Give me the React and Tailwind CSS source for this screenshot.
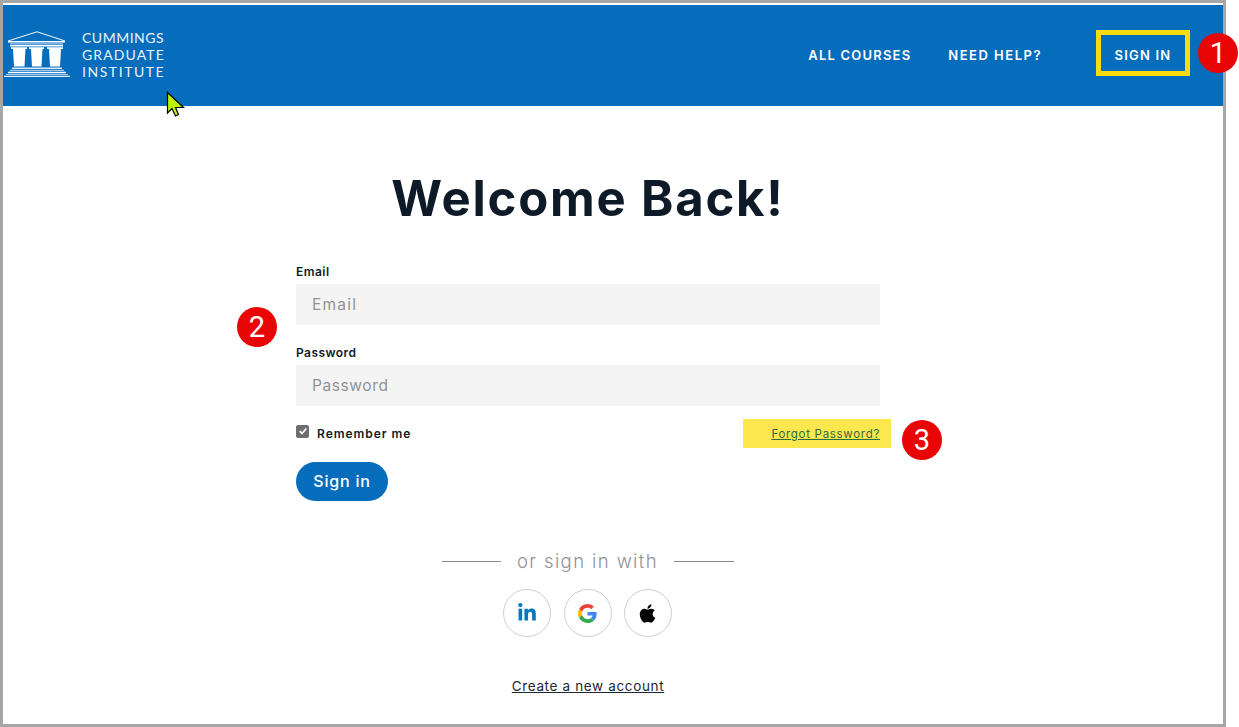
import React from 'react';
import { FaLinkedinIn, FaApple } from 'react-icons/fa';

function Logo() {
    return (
        <svg width="66" height="46" viewBox="0 0 66 46" className="block">
            <path d="M4 10 L33 .8 L61 10" fill="none" stroke="#e6f0fa" strokeWidth="1.200" />
            <path d="M4 10 H61 V11.500 H4 Z" fill="#ffffff" />
            <path d="M6 12.200 H59 V13.400 H6 Z" fill="#a9cbea" />
            <path d="M6 14 H59 V15.400 H6 Z" fill="#ffffff" />
            <path d="M7 16.200 H23 V18 H7 Z M25 16.200 H40 V18 H25 Z M43 16.200 H59 V18 H43 Z" fill="#ffffff" />
            <path d="M9 18 H21.500 L20.500 35.500 H10 Z M27 18 H38.500 L37.500 35.500 H28 Z M45 18 H57 L56 35.500 H46 Z" fill="#ffffff" />
            <path d="M8 36.500 H58 V38 H8 Z" fill="#dbe9f6" />
            <path d="M6 38.800 H60 V40 H6 Z" fill="#a9cbea" />
            <path d="M4 40.800 H62 V42.200 H4 Z" fill="#ffffff" />
            <path d="M2 43 H64 V44 H2 Z" fill="#a9cbea" />
            <path d="M0 44.800 H66 V46 H0 Z" fill="#e6f0fa" />
        </svg>
    );
}

function GoogleIcon() {
    return (
        <svg width="19" height="19" viewBox="0 0 48 48">
            <path fill="#EA4335" d="M24 9.500c3.500 0 6.700 1.200 9.200 3.600l6.900-6.900C35.900 2.400 30.500 0 24 0 14.600 0 6.500 5.400 2.600 13.200l8 6.200C12.500 13.700 17.800 9.500 24 9.500z" />
            <path fill="#4285F4" d="M47 24.500c0-1.600-.1-3.100-.4-4.500H24v9h12.900c-.6 3-2.200 5.500-4.700 7.200l7.700 6C44.400 38.500 47 32 47 24.500z" />
            <path fill="#FBBC05" d="M10.600 28.600c-.5-1.400-.8-3-.8-4.600s.3-3.200.8-4.600l-8-6.200C.9 16.500 0 20.100 0 24s.9 7.500 2.600 10.800l8-6.200z" />
            <path fill="#34A853" d="M24 48c6.500 0 11.900-2.100 15.900-5.800l-7.700-6c-2.200 1.400-4.900 2.300-8.200 2.300-6.200 0-11.500-4.200-13.400-9.900l-8 6.200C6.500 42.600 14.600 48 24 48z" />
        </svg>
    );
}

function Badge({ n, className }) {
    return (
        <div className={`absolute w-10 h-10 rounded-full bg-[#e90505] text-white flex items-center justify-center text-[29px] leading-none font-['Roboto',sans-serif] ${className}`}>
            {n}
        </div>
    );
}

function Field({ label, marginTop, tracking }) {
    return (
        <div className={marginTop}>
            <label className="block text-[12px] leading-[14px] font-semibold tracking-[0.45px] text-[#0f1a26] mb-[5px]">{label}</label>
            <div className={`h-[41px] bg-[#f4f4f4] pl-4 flex items-center text-[15.500px] text-[#8f9397] ${tracking}`}>{label}</div>
        </div>
    );
}

function Social({ children, className }) {
    return (
        <div className={`w-12 h-12 rounded-full border border-[#cfcfcf] flex items-center justify-center ${className || ''}`}>
            {children}
        </div>
    );
}

export default function App() {
    return (
        <div className="relative w-[1239px] h-[727px] bg-white overflow-hidden font-['Inter',sans-serif]">
            <div className="w-[1226px] h-[727px] border-[3px] border-[#a6a6a6] bg-white pt-[2px]">
                <header className="h-[101px] bg-[#066dbc] flex items-center text-white">
                    <div className="flex items-center ml-px mt-[-3px]">
                        <Logo />
                        <div className="ml-[12px] text-[14px] leading-[17px] font-['Lato',sans-serif] text-[#e9f2fa]">
                            <div className="tracking-[0.5px]">CUMMINGS</div>
                            <div className="tracking-[1.100px]">GRADUATE</div>
                            <div className="tracking-[1.550px]">INSTITUTE</div>
                        </div>
                    </div>
                    <nav className="ml-auto flex items-center text-[13px] font-semibold tracking-[1.200px] mr-[33px]">
                        <span>ALL COURSES</span>
                        <span className="ml-[37px] tracking-[1.500px]">NEED HELP?</span>
                        <span className="ml-[54px] mt-[-6px] pt-[6px] w-[94px] h-[46px] border-[5px] border-[#fcdc0c] flex items-center justify-center">SIGN IN</span>
                    </nav>
                </header>

                <main className="flex flex-col items-center pr-[50px]">
                    <h1 className="mt-[64px] text-[49px] leading-[58px] font-bold text-[#0e1a27] tracking-[1.800px]">Welcome Back!</h1>

                    <form className="w-[584px] mt-[37px]">
                        <Field label="Email" tracking="tracking-[1.200px]" />
                        <Field label="Password" marginTop="mt-[21px]" tracking="tracking-[0.6px]" />
                        <div className="flex items-center justify-between mt-[13px] h-[29px]">
                            <div className="flex items-center">
                                <span className="w-[13px] h-[13px] rounded-[2px] bg-[#6e6e6e] flex items-center justify-center mt-[-5px]">
                                    <svg width="10" height="10" viewBox="0 0 10 10"><path d="M1.800 5.200 L4 7.500 L8.300 2.500" fill="none" stroke="#fff" strokeWidth="1.700" /></svg>
                                </span>
                                <span className="ml-2 text-[12px] font-semibold tracking-[0.95px] text-[#0f1a26]">Remember me</span>
                            </div>
                            <div className="w-[148px] h-[29px] mr-[-11px] bg-[#fde74f] flex items-center justify-end pr-[11px]">
                                <a className="mt-[2px] text-[11.500px] tracking-[0.7px] text-[#2f6b3f] underline">Forgot Password?</a>
                            </div>
                        </div>
                        <button type="button" className="block mt-[14px] pb-[2px] w-[92px] h-[39px] rounded-full bg-[#066dbc] text-white text-[16px] tracking-[0.8px] font-medium">Sign in</button>
                    </form>

                    <div className="flex items-center mt-[48px]">
                        <span className="w-[59px] h-px bg-[#8a8a8a]" />
                        <span className="mx-4 text-[18.500px] leading-[24px] tracking-[1.400px] text-[#8f9397] font-light">or sign in with</span>
                        <span className="w-[60px] h-px bg-[#8a8a8a]" />
                    </div>

                    <div className="flex items-center gap-[12px] mt-[16px] ml-[-2px]">
                        <Social className="mr-px"><FaLinkedinIn className="text-[#0478bd] text-[20px]" /></Social>
                        <Social><GoogleIcon /></Social>
                        <Social><FaApple className="text-black text-[21px]" /></Social>
                    </div>

                    <a className="mt-[40px] text-[13.500px] leading-[18px] text-[#1c2733] underline tracking-[0.650px]">Create a new account</a>
                </main>
            </div>

            <Badge n="1" className="left-[1198px] top-[33px]" />
            <Badge n="2" className="left-[237px] top-[307px]" />
            <Badge n="3" className="left-[902px] top-[420px]" />

            <svg width="20" height="28" viewBox="0 0 20 28" className="absolute left-[166px] top-[91px]">
                <path d="M1.500 1.500 L1.500 22 L6 17.500 L9.500 25 L12.500 23.500 L9.500 16.500 L17.500 16.500 Z" fill="#bdf500" stroke="#000" strokeWidth="1.200" />
            </svg>
        </div>
    );
}
